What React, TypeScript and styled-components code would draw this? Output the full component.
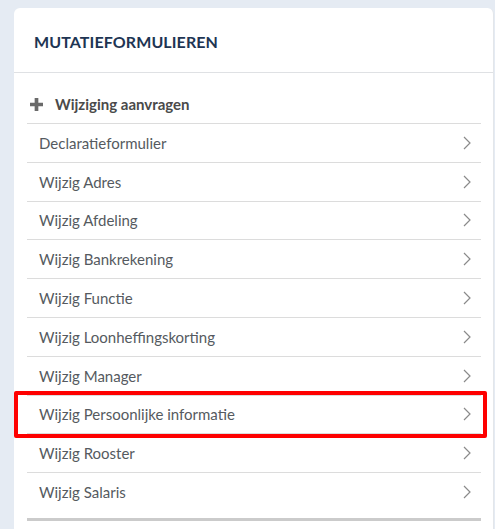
import React from "react";
import styled, { createGlobalStyle } from "styled-components";

const Global = createGlobalStyle`
  html, body { margin: 0; padding: 0; background: #e5ebf3; }
  body { font-family: "Source Sans Pro", Lato, "Liberation Sans", sans-serif; }
`;

const Page = styled.div`
  padding: 8px 1px 0 14px;
  height: 529px;
  box-sizing: border-box;
  overflow: hidden;
`;

const Card = styled.section`
  background: #fff;
  border-radius: 6px 6px 0 0;
  border-right: 1px solid #e3e6ea;
  min-height: 530px;
`;

const Header = styled.h2`
  margin: 0;
  height: 65px;
  box-sizing: border-box;
  padding: 3px 0 0 20px;
  display: flex;
  align-items: center;
  border-bottom: 1px solid #dfe1e4;
  font-family: Lato, sans-serif;
  font-weight: 700;
  font-size: 16px;
  letter-spacing: 0.1px;
  color: #1e3553;
`;

const List = styled.ul`
  list-style: none;
  margin: 0 12px 0 13px;
  padding: 0 0 7px;
  border-bottom: 3px solid #cbcbcb;
`;

const Row = styled.li<{ $lead?: boolean }>`
  position: relative;
  box-sizing: border-box;
  display: flex;
  align-items: center;
  gap: ${(p) => (p.$lead ? "12px" : "10px")};
  height: ${(p) => (p.$lead ? "50px" : "38.8px")};
  padding: ${(p) => (p.$lead ? "12px 3px 0" : "0 10px 0 12px")};
  border-top: ${(p) => (p.$lead ? "none" : "1px solid #dcdcdc")};
  font-family: Lato, sans-serif;
  font-size: 15px;
  font-weight: ${(p) => (p.$lead ? 700 : 400)};
  color: ${(p) => (p.$lead ? "#4a4a4a" : "#555a60")};
`;

const Label = styled.span`
  flex: 1;
`;

const Highlight = styled.div`
  position: absolute;
  left: -13px;
  right: -6px;
  top: -5px;
  bottom: -5px;
  border: 4px solid #fe0000;
  border-radius: 2px;
  pointer-events: none;
`;

const Plus = () => (
  <svg width="13" height="13" viewBox="0 0 12 12">
    <path d="M4.3 0h3.4v4.3H12v3.4H7.7V12H4.3V7.7H0V4.3h4.3z" fill="#6a6a6a" />
  </svg>
);

const Chevron = () => (
  <svg width="8" height="14" viewBox="0 0 8 14">
    <path d="M1 1l6 6-6 6" fill="none" stroke="#8a8a8a" strokeWidth="1.2" />
  </svg>
);

const items = [
  "Declaratieformulier",
  "Wijzig Adres",
  "Wijzig Afdeling",
  "Wijzig Bankrekening",
  "Wijzig Functie",
  "Wijzig Loonheffingskorting",
  "Wijzig Manager",
  "Wijzig Persoonlijke informatie",
  "Wijzig Rooster",
  "Wijzig Salaris",
];

export default function App() {
  return (
    <>
      <Global />
      <Page>
        <Card>
          <Header>MUTATIEFORMULIEREN</Header>
          <List>
            <Row $lead>
              <Plus />
              <Label>Wijziging aanvragen</Label>
            </Row>
            {items.map((t) => (
              <Row key={t}>
                <Label>{t}</Label>
                <Chevron />
                {t === "Wijzig Persoonlijke informatie" && <Highlight />}
              </Row>
            ))}
          </List>
        </Card>
      </Page>
    </>
  );
}
